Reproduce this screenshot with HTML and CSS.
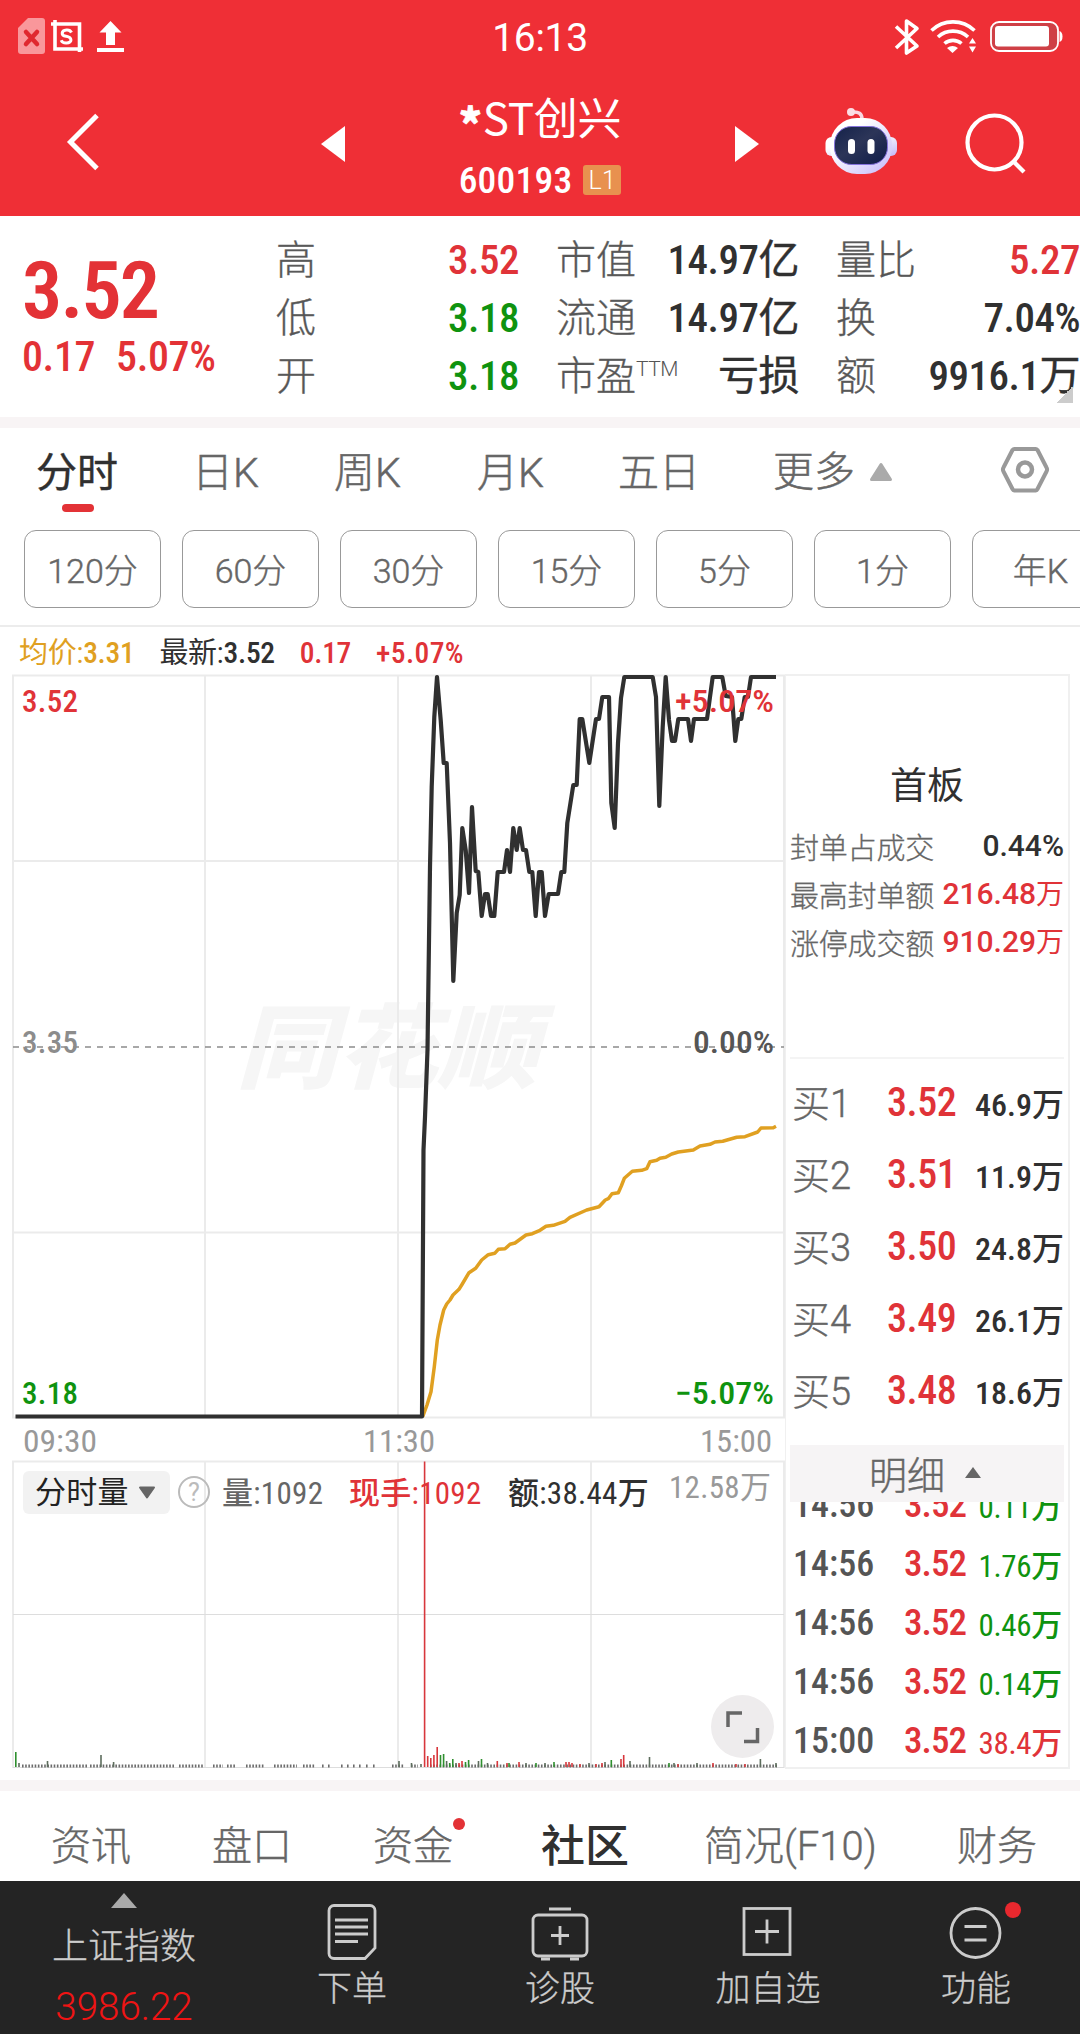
FILE: index.html
```
<!DOCTYPE html>
<html lang="zh-CN">
<head>
<meta charset="utf-8">
<title>*ST创兴 600193</title>
<link rel="stylesheet" href="styles.css">
</head>
<body>
<header class="top">
  <div class="status">
    <svg class="status-left" width="130" height="60" viewBox="0 0 130 60">
      <path d="M28 18H42a3 3 0 0 1 3 3V51a3 3 0 0 1-3 3H21a3 3 0 0 1-3-3V28Z" fill="#f9979b"/>
      <path d="M26 32l11 12M37 32l-11 12" stroke="#e0282f" stroke-width="4.5" stroke-linecap="round"/>
      <path d="M55 20v29H83M51 24H79.500v28" fill="none" stroke="#fff" stroke-width="3.600"/>
      <path d="M71.500 32.500c-1-2-3-2.700-5-2.500-5.500.5-5.800 5.500-.5 6.300 6.500 1 6.500 6.500.5 6.700-2.500.1-4.500-.8-5.300-2.800" fill="none" stroke="#fff" stroke-width="3"/>
      <path d="M110.500 21l11 11.500h-6.500V45h-9V32.500h-6.500Z" fill="#fff"/>
      <path d="M97 50h27" stroke="#fff" stroke-width="4"/>
    </svg>
    <span class="clock">16:13</span>
    <svg class="status-right" width="190" height="60" viewBox="890 0 190 60">
      <g fill="none" stroke="#fff" stroke-width="3.600">
        <path d="M896 26.500l21 19.500-10.500 7V21l10.500 7.500L896 48" stroke-linejoin="round"/>
        <path d="M931.500 30.500a31 31 0 0 1 43 0M938 37a22 22 0 0 1 30 0M944.500 43.500a13 13 0 0 1 17 0"/>
      </g>
      <path d="M947 48q5.500-4 11 0l-5.500 5ZM969 43.500l3.500-5.500 3.500 5.500ZM969 46.500h7l-3.500 6Z" fill="#fff"/>
      <rect x="991" y="22" width="67" height="29" rx="8" fill="#cf4046" stroke="#fff" stroke-width="1.800"/>
      <rect x="995" y="26" width="54" height="20.500" rx="3" fill="#fff"/>
      <path d="M1059.500 31q3 1 3 5.500t-3 5.500Z" fill="#fff"/>
    </svg>
  </div>
  <div class="titlebar">
    <svg class="back" width="100" height="70" viewBox="20 107 100 70"><path d="M97 115.500L70.500 142 97 168.500" fill="none" stroke="#fff" stroke-width="5"/></svg>
    <svg class="prev" width="24" height="38" viewBox="0 0 24 38"><path d="M0 19L24 1v36Z" fill="#fff"/></svg>
    <div class="stock">
      <div class="name"><b>*</b>ST创兴</div>
      <div class="code">600193<span class="level">L1</span></div>
    </div>
    <svg class="next" width="24" height="38" viewBox="0 0 24 38"><path d="M24 19L0 1v36Z" fill="#fff"/></svg>
    <svg class="robot" width="74" height="72" viewBox="824 105 74 72">
      <defs>
        <linearGradient id="shell" x1="0" y1="0" x2="1" y2="1"><stop offset=".3" stop-color="#fff"/><stop offset="1" stop-color="#c3b8fa"/></linearGradient>
        <linearGradient id="visor" x1="0" y1="0" x2="1" y2="1"><stop offset="0" stop-color="#14224a"/><stop offset=".45" stop-color="#2c3558"/><stop offset="1" stop-color="#0e1b48"/></linearGradient>
      </defs>
      <rect x="825.500" y="137" width="71.500" height="19" rx="6" fill="url(#shell)"/>
      <path d="M852 112q10-1 10 7" fill="none" stroke="#f9d8e2" stroke-width="3.500"/>
      <circle cx="851" cy="112" r="4" fill="#fbdde4"/>
      <rect x="830" y="118" width="62" height="56" rx="27" fill="url(#shell)"/>
      <rect x="834.500" y="126.500" width="53" height="38" rx="17" fill="url(#visor)" stroke="#8472dd" stroke-width="1"/>
      <rect x="848" y="139" width="7" height="15" rx="3.500" fill="#fff"/>
      <rect x="867.500" y="139" width="7" height="15" rx="3.500" fill="#fff"/>
    </svg>
    <svg class="search" width="64" height="64" viewBox="963 111 64 64"><circle cx="994.500" cy="142.500" r="27" fill="none" stroke="#fff" stroke-width="4.200"/><path d="M1013 161l11 11" stroke="#fff" stroke-width="4.200"/></svg>
  </div>
</header>

<section class="quote">
  <div class="last">
    <div class="price">3.52</div>
    <div class="change"><span>0.17</span><span>5.07%</span></div>
  </div>
  <dl class="facts">
    <dt>高</dt><dd class="up">3.52</dd>
    <dt>低</dt><dd class="down">3.18</dd>
    <dt>开</dt><dd class="down">3.18</dd>
  </dl>
  <dl class="facts">
    <dt>市值</dt><dd>14.97<span>亿</span></dd>
    <dt>流通</dt><dd>14.97<span>亿</span></dd>
    <dt>市盈<sup>TTM</sup></dt><dd><span>亏损</span></dd>
  </dl>
  <dl class="facts">
    <dt>量比</dt><dd class="up">5.27</dd>
    <dt>换</dt><dd>7.04%</dd>
    <dt>额</dt><dd>9916.1<span>万</span></dd>
  </dl>
  <i class="corner"></i>
</section>

<nav class="periods">
  <span class="active">分时</span><span>日K</span><span>周K</span><span>月K</span><span>五日</span>
  <span>更多<svg width="24" height="20" viewBox="0 0 24 20"><path d="M12 2.500L21.500 17.500H2.500Z" fill="#aaa" stroke="#aaa" stroke-width="3" stroke-linejoin="round"/></svg></span>
  <svg class="gear" width="50" height="48" viewBox="0 0 50 48"><path d="M14.500 3H35.500a3 3 0 0 1 2 1L46.500 21.500a4 4 0 0 1 0 4L37.500 43a3 3 0 0 1-2 1.500H14.500a3 3 0 0 1-2-1.500L3.500 25.500a4 4 0 0 1 0-4L12.500 4a3 3 0 0 1 2-1Z" fill="none" stroke="#999" stroke-width="4"/><circle cx="25" cy="23.500" r="7" fill="none" stroke="#999" stroke-width="4.500"/></svg>
</nav>
<div class="chips">
  <span>120分</span><span>60分</span><span>30分</span><span>15分</span><span>5分</span><span>1分</span><span class="cut">年K</span>
</div>
<div class="legend">
  <span class="avg">均价:<b>3.31</b></span><span>最新:<b>3.52</b></span><span class="up"><b>0.17</b></span><span class="up"><b>+5.07%</b></span>
</div>

<main class="board">
  <div class="chart">
    <svg width="785" height="1096" viewBox="0 674 785 1096">
      <text x="236" y="1081" class="watermark" textLength="302" lengthAdjust="spacingAndGlyphs">同花顺</text>
      <g fill="none" stroke="#ebebeb" stroke-width="2">
        <path d="M13 675.500H784V1417.500H13ZM205 675V1417M398 675V1417M591 675V1417M13 861H784M13 1232.500H784"/>
        <path d="M13 1768V1461.500H784V1768M205 1461V1767M398 1461V1767M591 1461V1767"/>
      </g>
      <path d="M13 1614.500H784M13 1767.500H784" stroke="#ddd"/>
      <path d="M13 1047H784" stroke="#8c8c8c" stroke-width="1.600" stroke-dasharray="6 6"/>
      <path d="M422.700 1416.700L427 1405 431 1391.700 434.300 1366.700 437.300 1340 440 1325 443.700 1310 446.700 1304 450 1300 453 1295 459 1289.300 462.300 1284 469 1272.700 475.700 1268.300 481.700 1260 488.300 1254.700 494.700 1253.300 498.300 1249.300 505 1248.700 510 1244.300 515 1243 526 1235 532.300 1233.700 540 1230.300 546 1226.300 553.300 1225.300 565 1221.300 570 1217.300 586.700 1210 599 1206.700 605.300 1200 608.300 1198.700 612 1193.700 618.300 1192.700 621.300 1186 624.300 1178.300 632.300 1171.300 641.700 1170.300 646.700 1168.700 650 1161.700 656.700 1160.300 660 1158.300 665.700 1157.300 671.700 1154 678.300 1152 693.300 1150 700 1146 710 1144.300 715 1142 722.700 1141.300 736.700 1137.300 745 1136.700 757.700 1132 761 1128 773.300 1127.700 776 1126.300" fill="none" stroke="#e0a021" stroke-width="3.500" stroke-linejoin="round"/>
      <path d="M15.500 1416.500H422L423.500 1150 425 1117 427.500 1050 430 867 431.700 787 434.300 717 437 677 440.700 720 443.700 763 446.700 763 450 843 453.300 981 456.700 913 459.700 895 462.300 828 465.700 850 469 893 472 807 475.700 871 478.300 872 481.700 916 485 894 487.700 894 491 916 494.300 916 497.700 872 504 872 507 850 510 872 513.300 828 516.700 850 519.700 828 523 850 526 850 529.300 872 532.300 872 535.700 916 539 872 541.700 872 545 916 548.700 894 558 894 561.300 872 564.300 872 567.300 823 573.300 785 576.700 785 579.700 719 582.300 719 589.300 763 596 719 599 719 602.300 697 609 697 611.300 803 614.700 828 618 743 621 698 624.300 677 652.700 677 656 697 659.300 806 662.700 727 665.700 677 669 720 672 741 675 741 678.300 719 688 719 691 741 694 719 707 719 712.700 677 722.300 677 725.700 696 732 697 735.300 741 738.300 719 741.300 719 744.700 697 748 697 751 677 776 677" fill="none" stroke="#303030" stroke-width="4.200" stroke-linejoin="round"/>
      <g class="axis">
        <text x="22" y="712" textLength="56" class="up">3.52</text>
        <text x="22" y="1053" textLength="56" class="dim">3.35</text>
        <text x="22" y="1404" textLength="56" class="down">3.18</text>
        <text x="675" y="712" textLength="99" lengthAdjust="spacingAndGlyphs" class="up">+5.07%</text>
        <text x="693" y="1053" textLength="81" lengthAdjust="spacingAndGlyphs" class="mid">0.00%</text>
        <text x="675" y="1404" textLength="99" lengthAdjust="spacingAndGlyphs" class="down">−5.07%</text>
        <g class="time">
          <text x="23" y="1452" textLength="74" lengthAdjust="spacingAndGlyphs">09:30</text>
          <text x="363" y="1452" textLength="72" lengthAdjust="spacingAndGlyphs">11:30</text>
          <text x="700" y="1452" textLength="72" lengthAdjust="spacingAndGlyphs">15:00</text>
        </g>
      </g>
      <g fill="none" stroke-width="1.600">
        <path d="M22 1766H87M90 1766H174M179 1766H204M213 1766H223M227 1766H235M246 1766H264M274 1766H297M303 1766H315M322 1766H324M328 1766H330M341 1766H343M347 1766H349M353 1766H355M359 1766H361M366 1766H368M373 1766H375M392 1766H404M411 1766H418M430 1766H777" stroke="#6b6b6b" stroke-width="3" stroke-dasharray="1.600 1.570"/>
        <path d="M19 1767v-4M47.500 1767v-6M101 1767v-12M113.600 1767v-5M399 1767v-6M411.500 1767v-4M421 1767v-3M446.600 1767v-6M456 1767v-4M478.500 1767v-6M487.500 1767v-4M526 1767v-4M545 1767v-4M589 1767v-4M605 1767v-5M630 1767v-6M649.500 1767v-10M674 1767v-4M697 1767v-4M760.400 1767v-8M776 1767v-4" stroke="#5d6d5d"/>
        <path d="M15.800 1767v-15M440.500 1767v-12M443.600 1767v-13M449.700 1767v-4M452.800 1767v-8M465.500 1767v-5M468.600 1767v-7M481.500 1767v-8M509 1767v-4M536 1767v-4M554 1767v-5M611.300 1767v-7M669 1767v-4" stroke="#2f8f2f"/>
        <path d="M424.600 1767V1461.500M427.700 1767v-11M430.800 1767v-9M433.900 1767v-12M437.200 1767v-20M459 1767v-4M462 1767v-6M497.300 1767v-6M507 1767v-4M519 1767v-5M566 1767v-5M569 1767v-5M572 1767v-4M580 1767v-3M596 1767v-3M602 1767v-4M621 1767v-8M623.700 1767v-12M678 1767v-3M713 1767v-4M736 1767v-3M745 1767v-3" stroke="#d8373c"/>
      </g>
    </svg>
    <div class="volbar">
      <span class="select">分时量<svg width="20" height="16" viewBox="0 0 20 16"><path d="M3 2.500H17L10 12.500Z" fill="#666" stroke="#666" stroke-width="2" stroke-linejoin="round"/></svg></span>
      <span class="help">?</span>
      <span class="vol">量:1092</span>
      <span class="up hand">现手:1092</span>
      <span class="amt">额:38.44万</span>
      <span class="max">12.58万</span>
    </div>
    <button class="expand" aria-label="全屏"><svg width="36" height="36" viewBox="0 0 36 36"><path d="M3 18V4H17M19 32.500H32.500V19" fill="none" stroke="#666" stroke-width="3.500"/></svg></button>
  </div>
  <aside class="side">
    <div class="limit">
      <h2>首板</h2>
      <p><span>封单占成交</span><b>0.44%</b></p>
      <p class="up"><span>最高封单额</span><b>216.48<em>万</em></b></p>
      <p class="up"><span>涨停成交额</span><b>910.29<em>万</em></b></p>
    </div>
    <div class="bids">
      <p><span>买1</span><b>3.52</b><em>46.9万</em></p>
      <p><span>买2</span><b>3.51</b><em>11.9万</em></p>
      <p><span>买3</span><b>3.50</b><em>24.8万</em></p>
      <p><span>买4</span><b>3.49</b><em>26.1万</em></p>
      <p><span>买5</span><b>3.48</b><em>18.6万</em></p>
    </div>
    <div class="detail">明细<i></i></div>
    <div class="ticks">
      <p><span>14:56</span><b>3.52</b><em class="down">0.11万</em></p>
      <p><span>14:56</span><b>3.52</b><em class="down">1.76万</em></p>
      <p><span>14:56</span><b>3.52</b><em class="down">0.46万</em></p>
      <p><span>14:56</span><b>3.52</b><em class="down">0.14万</em></p>
      <p><span>15:00</span><b>3.52</b><em class="up">38.4万</em></p>
    </div>
  </aside>
</main>

<nav class="sections">
  <span>资讯</span><span>盘口</span><span class="dot">资金</span><span class="active">社区</span><span>简况(F10)</span><span>财务</span>
</nav>

<footer class="tools">
  <div class="index"><i></i><span>上证指数</span><strong>3986.22</strong></div>
  <div class="tool">
    <svg width="60" height="60" viewBox="0 0 60 60"><path d="M12 3.500H48a5 5 0 0 1 5 5V46L43 56.500H12a5 5 0 0 1-5-5V8.500a5 5 0 0 1 5-5Z"/><path d="M13 18H46M13 25H46M13 32H46M13 39.500H36"/></svg>
    <span>下单</span>
  </div>
  <div class="tool">
    <svg width="60" height="60" viewBox="0 0 60 60"><rect x="3" y="13" width="54" height="41" rx="5"/><path d="M19 7H41M21 33.500H39M30 24V43M11 57H20M40 57H49"/></svg>
    <span>诊股</span>
  </div>
  <div class="tool">
    <svg width="60" height="60" viewBox="0 0 60 60"><rect x="6" y="6.500" width="46" height="46"/><path d="M17 29.500H41M29 17.500V41.500"/></svg>
    <span>加自选</span>
  </div>
  <div class="tool alert">
    <svg width="60" height="60" viewBox="0 0 60 60"><circle cx="29.500" cy="31" r="24.500"/><path d="M18.500 24.500H40.500M18.500 38H40.500" stroke-width="3.200"/></svg>
    <span>功能</span>
  </div>
</footer>
</body>
</html>
```
FILE: styles.css
```
* { box-sizing: border-box; margin: 0; padding: 0; }
body { width: 1080px; height: 2034px; overflow: hidden; background: #fff; color: #303030; font-family: Roboto, "Noto Sans CJK SC", sans-serif; }
svg { display: block; flex: none; }
i, em { font-style: normal; }
.up { color: #e03338; }
.down { color: #0f930f; }

.top { height: 216px; background: #ef2f36; color: #fff; }
.status { display: grid; grid-template-columns: 1fr auto 1fr; height: 68px; }
.status-right { justify-self: end; }
.clock { font-size: 39px; line-height: 76px; letter-spacing: -.3px; }
.titlebar { display: flex; align-items: flex-start; height: 148px; }
.back { margin: 39px 0 0 20px; }
.prev { margin: 57px 0 0 201px; }
.stock { width: 390px; text-align: center; }
.name { display: flex; justify-content: center; height: 82px; padding-top: 23px; font: 400 44px/50px "Noto Sans CJK SC", sans-serif; letter-spacing: -.3px; }
.name b { padding: 6px 1px 0 0; font-weight: 900; -webkit-text-stroke: .6px #fff; }
.code { display: flex; justify-content: center; align-items: center; gap: 11px; height: 60px; font-size: 37.500px; font-weight: 500; font-stretch: 75%; letter-spacing: .2px; }
.level { width: 38px; height: 30px; border-radius: 3px; background: #e8914f; font-size: 25px; font-weight: 300; font-stretch: 100%; line-height: 31px; }
.next { margin: 57px 0 0; }
.robot { margin: 37px 0 0 65px; }
.search { margin: 43px 0 0 65px; }

.quote { position: relative; display: flex; height: 212px; border-bottom: 11px solid #f8f4f5; }
.last { width: 276px; padding: 35px 0 0 22px; color: #e33236; }
.price { font-size: 80px; line-height: 80px; font-weight: 600; font-stretch: 75%; letter-spacing: -1.800px; }
.change { display: flex; gap: 21px; padding-top: 2px; font-size: 42px; line-height: 48px; font-weight: 500; font-stretch: 75%; letter-spacing: -.4px; }
.facts { display: grid; grid-template-columns: 78px 1fr; grid-auto-rows: 58px; width: 243px; margin-right: 37px; padding-top: 15px; line-height: 59px; }
.facts:last-of-type { width: 244px; margin-right: 0; }
.facts dt { font-size: 40px; font-weight: 300; color: #555; white-space: nowrap; -webkit-text-stroke: .4px #666; }
.facts dd { font-size: 41px; font-weight: 500; font-stretch: 75%; text-align: right; letter-spacing: -.5px; white-space: nowrap; }
.facts dd span { font-weight: 400; -webkit-text-stroke: .4px #303030; }
.facts sup { font-size: 21px; line-height: 20px; vertical-align: 14px; letter-spacing: -.5px; -webkit-text-stroke: 0; }
.corner { position: absolute; right: 7px; bottom: 14px; width: 17px; height: 17px; background: linear-gradient(135deg, transparent 50%, #ccc 50%); }

.periods { display: grid; grid-template-columns: 156px 142px 143px 141px 155px 224px 60px; height: 102px; padding: 4px 0 0 36px; font-size: 41px; line-height: 82px; color: #666; font-weight: 300; -webkit-text-stroke: .5px #666; white-space: nowrap; }
.periods span:nth-child(6) { display: flex; gap: 14px; align-items: center; height: 80px; }
.periods .active { color: #303030; font-weight: 400; -webkit-text-stroke: .4px #303030; height: 80px; }
.periods .active::after { content: ""; display: block; width: 32px; height: 8px; margin: -10px 0 0 26px; border-radius: 4px; background: #e33236; }
.gear { margin: 14px 0 0 3px; }
.chips { display: flex; gap: 21px; height: 97px; padding-left: 24px; overflow: hidden; border-bottom: 2px solid #ececec; }
.chips span { flex: 0 0 137px; height: 78px; border: 1.500px solid #999; border-radius: 12px; text-align: center; font-size: 34px; line-height: 80px; font-weight: 300; color: #666; -webkit-text-stroke: .4px #666; letter-spacing: 0; }
.legend { display: flex; gap: 25px; height: 47px; padding: 1px 0 0 19px; font-size: 29px; line-height: 50px; letter-spacing: -.3px; }
.legend b { font-weight: 500; font-stretch: 78%; font-size: 29.500px; letter-spacing: -.3px; }
.legend .up:last-child b { letter-spacing: .4px; }
.legend .avg { color: #e0a021; }

.board { display: flex; height: 1106px; }
.chart { position: relative; width: 785px; }
.watermark { font: 900 92px "Noto Sans CJK SC", sans-serif; font-style: italic; fill: #f6f6f6; }
.axis { font-size: 31px; font-weight: 500; font-stretch: 75%; }
.axis .up { fill: #e03338; }
.axis .down { fill: #0f930f; }
.axis .dim { fill: #8c8c8c; }
.axis .mid { fill: #555; }
.time { fill: #999; font-weight: 450; }
.volbar { position: absolute; left: 23px; top: 797px; display: flex; height: 43px; font-size: 31px; line-height: 45px; font-weight: 450; font-stretch: 80%; white-space: nowrap; letter-spacing: .3px; }
.select { display: flex; align-items: center; gap: 8px; width: 147px; padding-left: 12px; border-radius: 6px; background: #f2f2f2; font-weight: 400; color: #222; }
.help { width: 32px; height: 32px; margin: 5px 12px 0 8px; border: 2px solid #bbb; border-radius: 50%; color: #bbb; font-size: 25px; line-height: 29px; text-align: center; font-weight: 400; font-stretch: 100%; }
.vol { width: 127px; color: #666; }
.hand { width: 159px; }
.amt { width: 161px; color: #303030; }
.max { color: #999; font-weight: 400; line-height: 33px; }
.expand { position: absolute; left: 711px; top: 1021px; display: grid; place-items: center; width: 63px; height: 63px; border: 0; border-radius: 50%; background: #eeeced; }

.side { width: 285px; height: 1095px; border: 2px solid #f0f0f0; border-left-width: 1px; }
.side p { display: flex; align-items: center; white-space: nowrap; }
.limit { height: 383px; margin: 0 4px; padding: 86px 0 0; border-bottom: 2px solid #f4f4f4; }
.limit h2 { font-size: 37px; line-height: 50px; font-weight: 400; text-align: center; padding-bottom: 10px; }
.limit p { justify-content: space-between; height: 48px; font-size: 29px; letter-spacing: -.2px; }
.limit span { color: #666; font-weight: 300; -webkit-text-stroke: .3px #666; }
.limit b { font-size: 30px; line-height: 48px; font-weight: 500; font-stretch: 88%; letter-spacing: 0; }
.limit b em { font-size: 28px; font-weight: 400; }
.bids { height: 386px; padding: 7px 4px 0 6px; }
.bids p { height: 72px; }
.bids span { width: 95px; margin-top: -3px; font-size: 38px; font-weight: 300; color: #666; -webkit-text-stroke: .4px #666; }
.bids b, .ticks b { font-size: 40px; font-weight: 500; font-stretch: 75%; color: #e03338; letter-spacing: -.5px; }
.bids em { flex: 1; text-align: right; font-size: 32px; font-weight: 500; font-stretch: 76%; }
.detail { display: flex; align-items: center; gap: 20px; height: 57px; margin: 0 4px; padding: 0 0 2px 79px; background: #f6f4f5; color: #666; font-size: 38px; font-weight: 300; -webkit-text-stroke: .4px #666; }
.detail i { border: solid transparent; border-width: 0 8px 11px; border-bottom-color: #666; }
.ticks { height: 266px; overflow: hidden; padding: 0 6px 0 7px; }
.ticks p { height: 59px; }
.ticks p:first-child { margin-top: -27px; }
.ticks span { width: 111px; font-size: 36px; font-weight: 500; font-stretch: 75%; color: #555; letter-spacing: 0; }
.ticks b { font-size: 37px; letter-spacing: -.9px; }
.ticks em { flex: 1; text-align: right; font-size: 31px; font-weight: 450; font-stretch: 75%; letter-spacing: -.3px; }

.sections { display: grid; grid-template-columns: 161px 161px 168px 163px 253px 100px; height: 101px; padding-left: 51px; border-top: 11px solid #f8f4f5; font-size: 40px; line-height: 112px; font-weight: 300; color: #666; -webkit-text-stroke: .4px #666; white-space: nowrap; }
.sections .dot { position: relative; }
.sections .dot::after { content: ""; position: absolute; left: 80px; top: 27px; width: 12px; height: 12px; border-radius: 50%; background: #e33236; }
.sections .active { font-size: 44px; font-weight: 500; color: #303030; -webkit-text-stroke: 0; }
.tools { display: flex; height: 153px; background: #242424; color: #ccc; font-weight: 300; }
.index { display: flex; flex-direction: column; align-items: center; width: 248px; }
.index i { margin: 12px 0 13px; border: solid transparent; border-width: 0 13px 15px; border-bottom-color: #aaa; }
.index span { font-size: 36px; line-height: 52px; -webkit-text-stroke: .3px #ccc; }
.index strong { font-size: 38.500px; line-height: 68px; font-weight: 350; color: #f01414; }
.tool { display: flex; flex-direction: column; align-items: center; width: 208px; padding-top: 21px; font-size: 35px; line-height: 56px; -webkit-text-stroke: .3px #ccc; }
.tool svg { fill: none; stroke: #ccc; stroke-width: 2.800; }
.alert { position: relative; }
.alert::after { content: ""; position: absolute; left: 133px; top: 21px; width: 16px; height: 16px; border-radius: 50%; background: #e8282e; }
```
